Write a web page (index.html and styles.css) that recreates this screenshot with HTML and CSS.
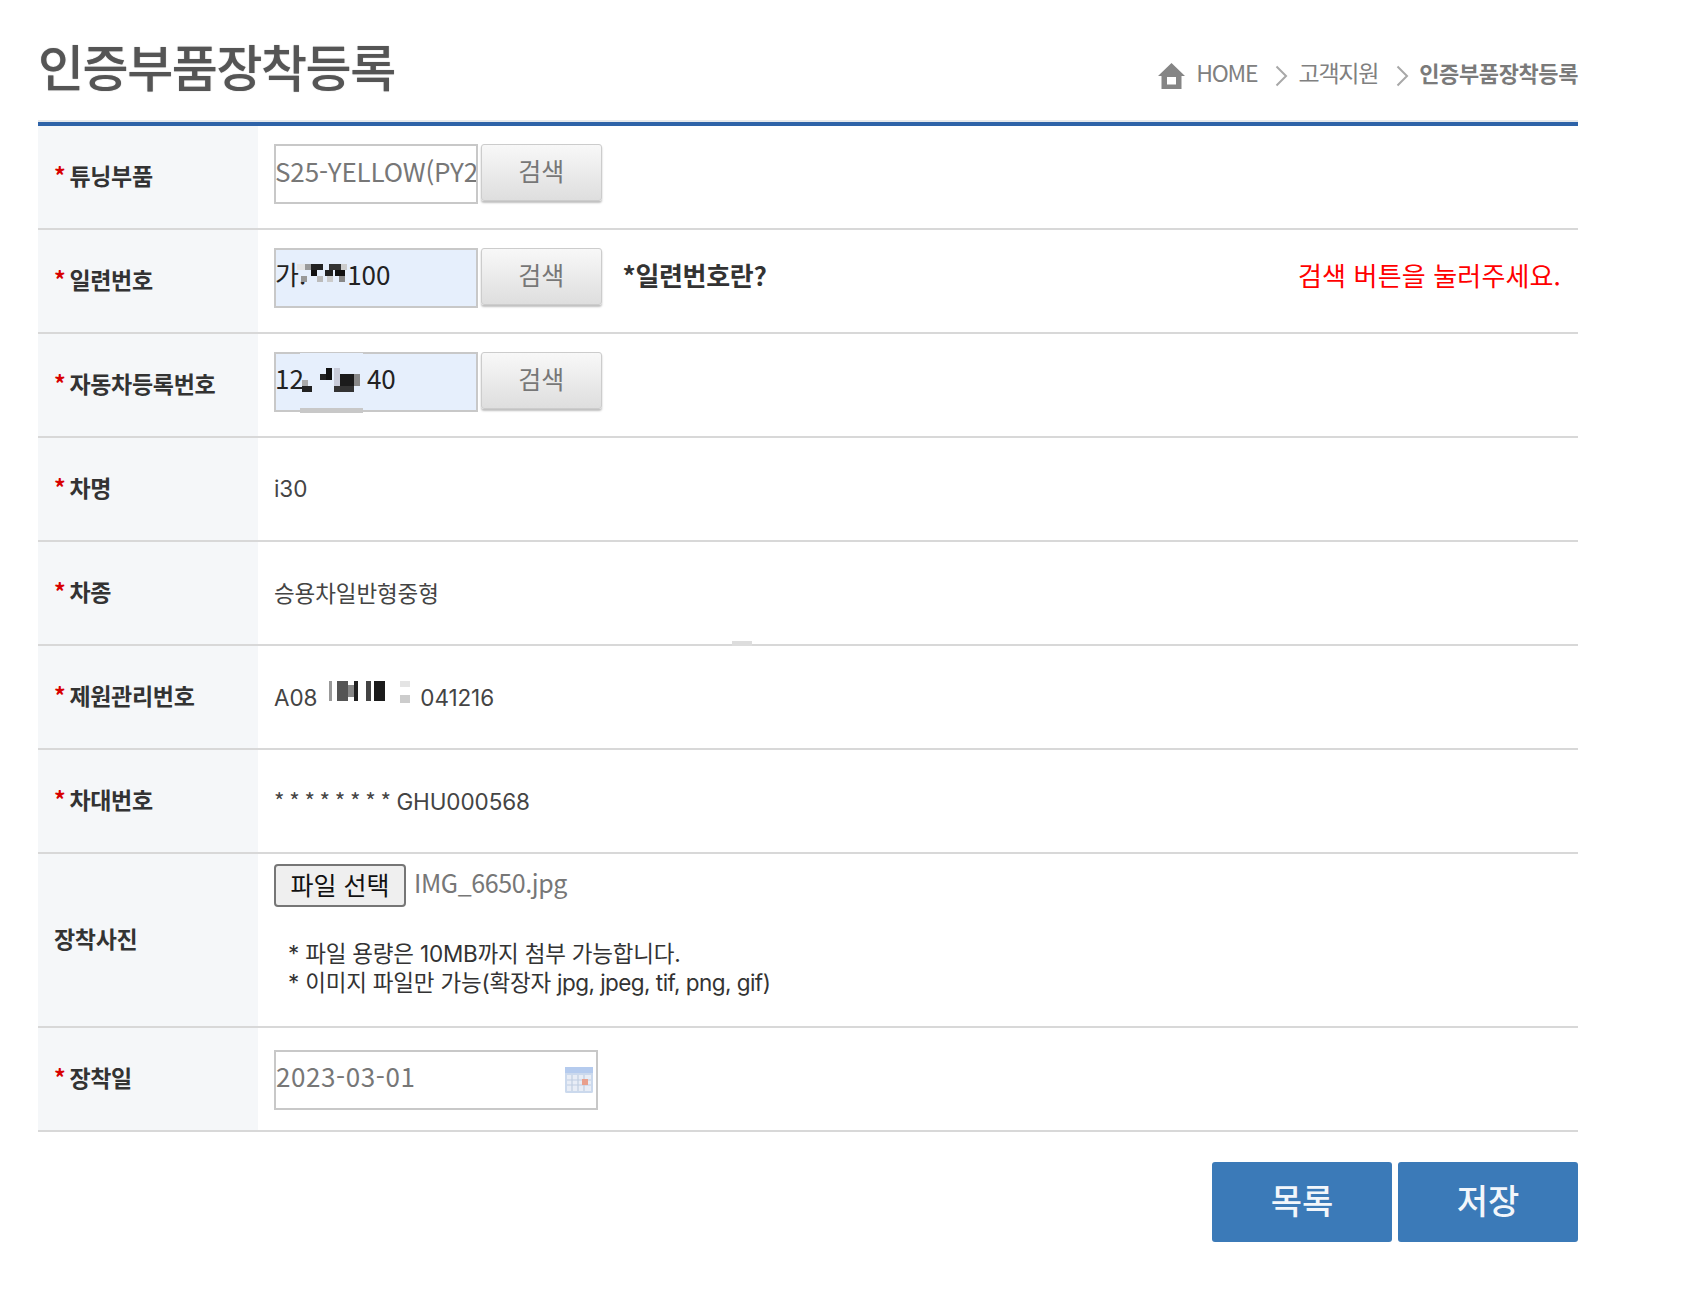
FILE: index.html
```html
<!DOCTYPE html>
<html lang="ko">
<head>
<meta charset="utf-8">
<title>인증부품장착등록</title>
<link rel="stylesheet" href="styles.css">
</head>
<body>
<main class="page">
  <header class="head">
    <h1 class="title">인증부품장착등록</h1>
    <nav class="crumbs">
      <svg class="home" viewBox="0 0 27 26"><path d="M13.5 0 L27 13 H23.5 V26 H3.5 V13 H0 Z M9 14 V21.5 H18 V14 Z" fill="#858585" fill-rule="evenodd"/></svg>
      <span class="crumb home-label">HOME</span>
      <svg class="chev" viewBox="0 0 13 22"><path d="M1.5 1.5 L11 11 L1.5 20.5" fill="none" stroke="#a8a8a8" stroke-width="2"/></svg>
      <span class="crumb">고객지원</span>
      <svg class="chev" viewBox="0 0 13 22"><path d="M1.5 1.5 L11 11 L1.5 20.5" fill="none" stroke="#a8a8a8" stroke-width="2"/></svg>
      <strong class="crumb current">인증부품장착등록</strong>
    </nav>
  </header>

  <table class="form">
    <tr>
      <th><span class="req">*</span>튜닝부품</th>
      <td class="field">
        <div class="line">
          <div class="box muted clip part">S25-YELLOW(PY2</div>
          <button class="search" type="button">검색</button>
        </div>
      </td>
    </tr>
    <tr>
      <th><span class="req">*</span>일련번호</th>
      <td class="field">
        <div class="line">
          <div class="box filled">가.<svg class="mosaic m1" viewBox="0 0 50 18" shape-rendering="crispEdges"><rect x="0" y="0" width="8" height="6" fill="#e4e4e4"/><rect x="8" y="0" width="6" height="6" fill="#9a9a9a"/><rect x="14" y="0" width="12" height="6" fill="#222"/><rect x="32" y="0" width="12" height="6" fill="#333"/><rect x="14" y="6" width="6" height="6" fill="#111"/><rect x="28" y="6" width="8" height="6" fill="#222"/><rect x="38" y="6" width="10" height="6" fill="#111"/><rect x="44" y="0" width="6" height="6" fill="#ccc"/><rect x="4" y="12" width="6" height="6" fill="#999"/><rect x="20" y="12" width="6" height="6" fill="#bbb"/><rect x="30" y="12" width="6" height="6" fill="#ccc"/><rect x="42" y="12" width="6" height="6" fill="#888"/></svg>100</div>
          <button class="search" type="button">검색</button>
          <strong class="hint">*일련번호란?</strong>
          <span class="warn">검색 버튼을 눌러주세요.</span>
        </div>
      </td>
    </tr>
    <tr>
      <th><span class="req">*</span>자동차등록번호</th>
      <td class="field">
        <div class="line">
          <div class="box filled">12<svg class="mosaic m2" viewBox="0 0 63 60" shape-rendering="crispEdges"><rect width="63" height="5" fill="#e6effc"/><rect y="55" width="63" height="5" fill="#c8c8c8"/><rect x="2" y="27" width="6" height="6" fill="#aaa"/><rect x="2" y="33" width="10" height="6" fill="#222"/><rect x="20" y="21" width="6" height="6" fill="#222"/><rect x="26" y="15" width="6" height="12" fill="#111"/><rect x="34" y="15" width="6" height="18" fill="#c8cbd8"/><rect x="40" y="21" width="14" height="12" fill="#1b1b1b"/><rect x="34" y="33" width="20" height="6" fill="#333"/><rect x="54" y="21" width="6" height="12" fill="#888"/></svg>40</div>
          <button class="search" type="button">검색</button>
        </div>
      </td>
    </tr>
    <tr>
      <th><span class="req">*</span>차명</th>
      <td>i30</td>
    </tr>
    <tr>
      <th><span class="req">*</span>차종</th>
      <td class="with-tick">승용차일반형중형<span class="tick"></span></td>
    </tr>
    <tr>
      <th><span class="req">*</span>제원관리번호</th>
      <td>A08<svg class="mosaic m3" viewBox="0 0 84 24" shape-rendering="crispEdges"><rect x="0" y="0" width="3" height="20" fill="#999"/><rect x="8" y="0" width="11" height="20" fill="#555"/><rect x="19" y="4" width="6" height="12" fill="#888"/><rect x="25" y="0" width="4" height="20" fill="#222"/><rect x="37" y="0" width="5" height="20" fill="#444"/><rect x="45" y="0" width="11" height="20" fill="#1b1b1b"/><rect x="71" y="0" width="10" height="6" fill="#e4e4e4"/><rect x="71" y="14" width="10" height="8" fill="#ccc"/></svg>041216</td>
    </tr>
    <tr>
      <th><span class="req">*</span>차대번호</th>
      <td><span class="stars">* * * * * * * *</span> GHU000568</td>
    </tr>
    <tr class="photo">
      <th>장착사진</th>
      <td class="field">
        <div class="picker">
          <button class="choose" type="button">파일 선택</button>
          <span class="filename">IMG_6650.jpg</span>
        </div>
        <p class="note">* 파일 용량은 10MB까지 첨부 가능합니다.<br>* 이미지 파일만 가능(확장자 <span class="ext">jpg, jpeg, tif, png, gif</span>)</p>
      </td>
    </tr>
    <tr>
      <th><span class="req">*</span>장착일</th>
      <td class="field">
        <div class="box date muted">
          <span>2023-03-01</span>
          <svg class="cal" viewBox="0 0 28 26"><rect x="0" y="0" width="28" height="26" rx="1.5" fill="#c3d3ea"/><rect x="0" y="0" width="28" height="6" fill="#a9c3ec"/><rect x="2" y="8" width="24" height="16" fill="#e4ebf5"/><path d="M7 8V24M13 8V24M19 8V24M2 13H26M2 18H26" stroke="#b6c6dd" stroke-width="1.2"/><rect x="17" y="12" width="6" height="6" fill="#e6907a"/></svg>
        </div>
      </td>
    </tr>
  </table>

  <div class="actions">
    <a class="act">목록</a>
    <a class="act">저장</a>
  </div>
</main>
</body>
</html>
```

FILE: styles.css
```css
* { box-sizing: border-box; }
html, body { margin: 0; background: #fff; }
body {
  font-family: "Noto Sans CJK KR", "Noto Sans", sans-serif;
  color: #333;
}
.page { width: 1540px; margin-left: 38px; }

.head {
  height: 126px;
  display: flex;
  justify-content: space-between;
  align-items: flex-start;
  border-bottom: 4px solid #2e63a8;
  box-shadow: inset 0 -2px 0 #e6e9ec;
}
.title {
  margin: 30px 0 0;
  font-size: 50px;
  line-height: 70px;
  font-weight: 500;
  letter-spacing: -1.4px;
  color: #555;
  text-shadow: 0 0 1px rgba(85,85,85,.6);
}
.crumbs {
  display: flex;
  align-items: center;
  height: 40px;
  margin-top: 52px;
}
.home { width: 27px; height: 26px; margin-right: 11px; margin-top: 8px; }
.crumb {
  font-size: 23px;
  line-height: 40px;
  letter-spacing: -1.2px;
  color: #808080;
  white-space: nowrap;
}
.chev { width: 13px; height: 22px; margin: 8px 10px 0 18px; }
.current { font-weight: 700; color: #7a7a7a; font-size: 22px; letter-spacing: -0.4px; }

.form {
  width: 100%;
  border-collapse: collapse;
  table-layout: fixed;
}
.form th, .form td {
  height: 104px;
  border-bottom: 2px solid #d8d8d8;
  font-size: 22.5px;
  letter-spacing: -0.1px;
  vertical-align: middle;
  padding: 0 16px 4px;
}
.form td { padding-bottom: 2px; }
.form tr:first-child th, .form tr:first-child td { height: 103px; }
.form th {
  width: 220px;
  background: #f5f7f9;
  text-align: left;
  font-weight: 700;
  color: #333;
  font-size: 23px;
  letter-spacing: -0.3px;
  white-space: nowrap;
}
.form td { color: #444; font-family: Inter, "Noto Sans CJK KR", sans-serif; }
.form td.field { vertical-align: top; padding-top: 18px; padding-bottom: 0; }
.req { color: #d80000; margin-right: 4px; }
.photo th, .photo td { height: 174px; }
.form .photo td.field { padding-top: 10px; }
.stars { font-family: "Noto Sans CJK KR", sans-serif; letter-spacing: -0.8px; }

.line { display: flex; align-items: flex-start; }
.box {
  width: 204px;
  height: 60px;
  border: 2px solid #c8c8c8;
  font-family: "Noto Sans CJK KR", sans-serif;
  font-size: 26px;
  line-height: 50px;
  text-indent: -1px;
  letter-spacing: 0;
  white-space: nowrap;
}
.part { letter-spacing: -0.15px; }
.muted { color: #777; }
.clip { overflow: hidden; }
.filled { background: #e6effc; color: #222; line-height: 48px; }
.search {
  width: 120.5px;
  height: 57px;
  margin-left: 3px;
  border: 1px solid #ccc;
  border-radius: 3px;
  background: linear-gradient(#f8f8f8, #dedede);
  box-shadow: 0 2px 2px rgba(0,0,0,.25);
  font: 400 25px "Noto Sans CJK KR", sans-serif;
  color: #777;
  padding: 0 0 6px;
}
.hint { margin-left: 21px; font-family: "Noto Sans CJK KR", sans-serif; font-size: 26px; line-height: 54px; letter-spacing: -0.3px; color: #333; }
.warn { margin-left: auto; margin-right: 1px; font-family: "Noto Sans CJK KR", sans-serif; font-size: 26px; line-height: 54px; letter-spacing: 0.15px; color: #f00; }

.mosaic { display: inline-block; }
.m1 { width: 50px; height: 18px; vertical-align: 3px; margin: 0 0 0 -9px; }
.m2 { width: 63px; height: 60px; vertical-align: middle; margin: -4px 4px -6px -4px; }
.m3 { width: 84px; height: 24px; vertical-align: 1px; margin: 0 7px 0 12px; }

.with-tick { position: relative; }
.tick {
  position: absolute;
  left: 474px;
  bottom: -2px;
  width: 20px;
  height: 5px;
  background: #ddd;
}

.picker { display: flex; align-items: flex-start; }
.choose {
  width: 132px;
  height: 43px;
  border: 2px solid #767676;
  border-radius: 4px;
  background: #efefef;
  font: 400 25px "Noto Sans CJK KR", sans-serif;
  color: #111;
  padding: 0 0 6px;
  letter-spacing: 0;
}
.filename { margin-left: 8px; font-family: "Noto Sans CJK KR", sans-serif; font-size: 25px; line-height: 37px; letter-spacing: -0.4px; color: #777; }
.note {
  margin: 32px 0 0 14px;
  font-size: 22.5px;
  line-height: 29px;
  letter-spacing: -0.2px;
  color: #333;
}
.ext { letter-spacing: -0.55px; }

.date {
  width: 324px;
  display: flex;
  justify-content: space-between;
  align-items: center;
  padding: 0 3px 0 0;
  margin-top: 4px;
  letter-spacing: 0.6px;
  text-indent: 0;
}
.date span { margin-top: -8px; }
.cal { width: 28px; height: 26px; opacity: .85; }

.actions {
  display: flex;
  justify-content: flex-end;
  gap: 6px;
  margin-top: 30px;
}
.act {
  width: 180px;
  height: 80px;
  border-radius: 3px;
  background: #3b7ab8;
  color: #f2f6fb;
  font-size: 34px;
  line-height: 76px;
  text-align: center;
  font-weight: 500;
}
```
